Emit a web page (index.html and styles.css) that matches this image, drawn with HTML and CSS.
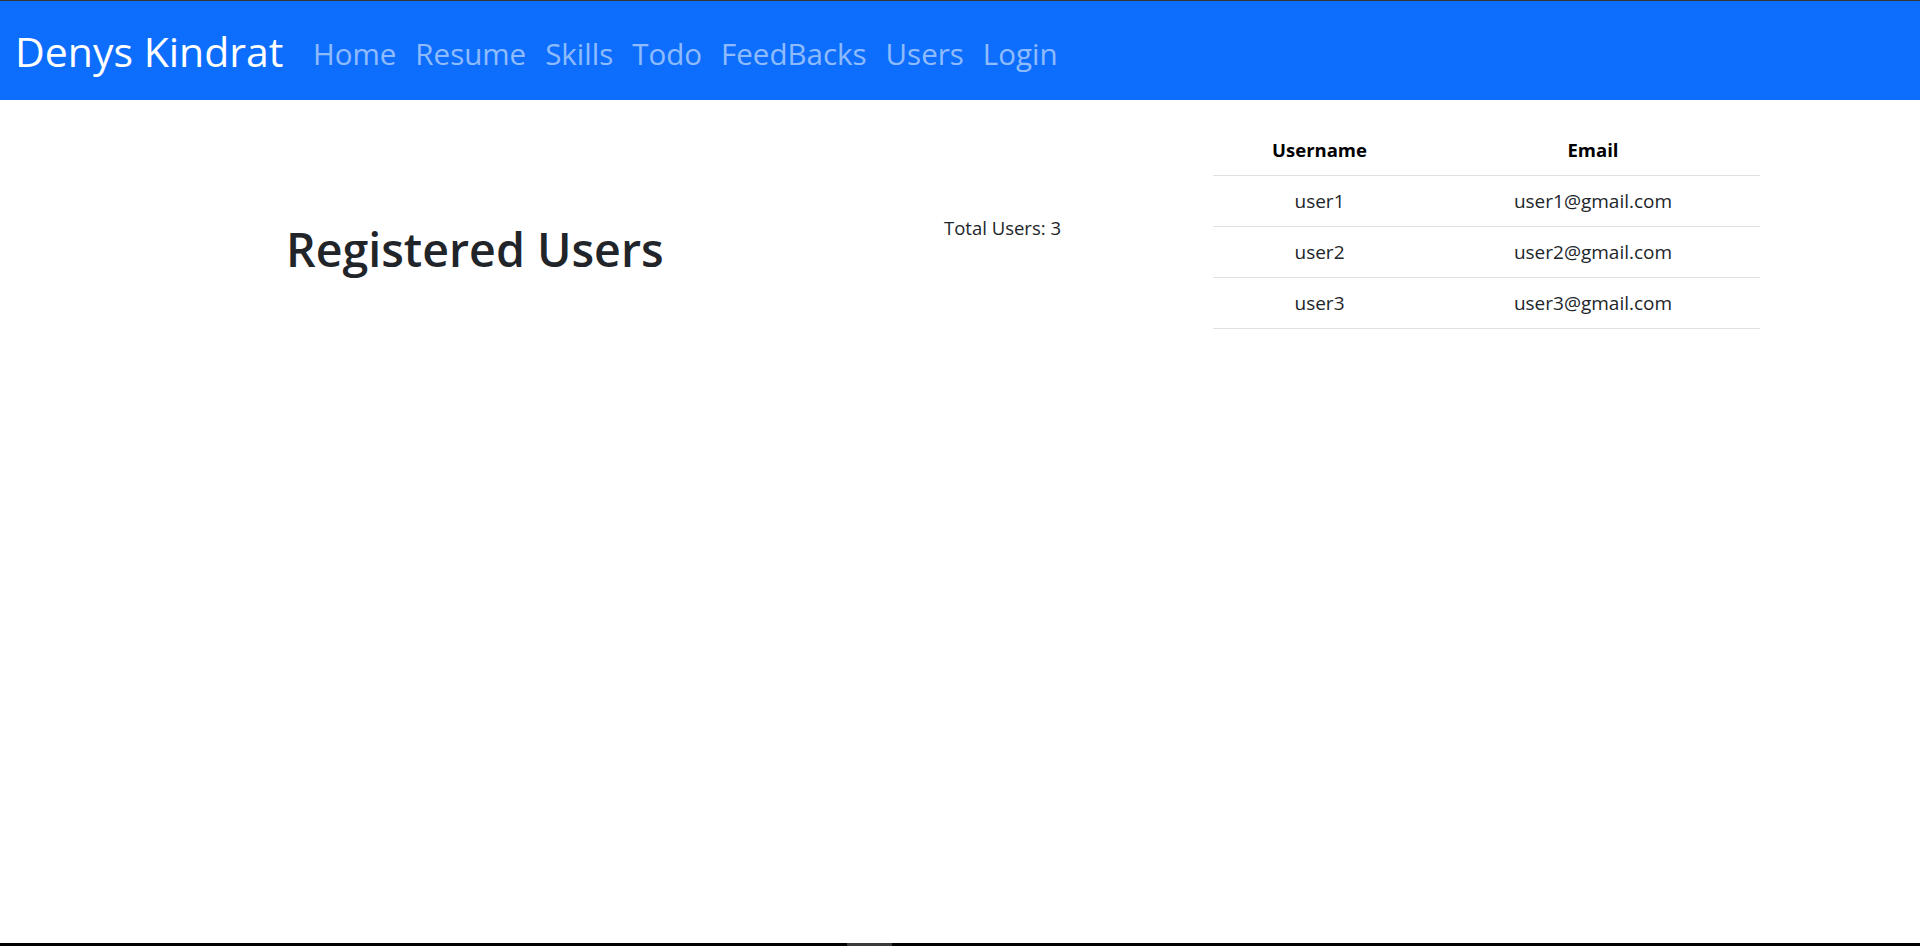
FILE: index.html
```html
<!DOCTYPE html>
<html lang="en">
<head>
<meta charset="utf-8">
<title>Registered Users</title>
<link rel="stylesheet" href="styles.css">
</head>
<body>
<div class="page">
  <nav class="navbar">
    <a class="brand" href="#">Denys Kindrat</a>
    <ul class="nav">
      <li><a class="nav-link" href="#">Home</a></li>
      <li><a class="nav-link" href="#">Resume</a></li>
      <li><a class="nav-link" href="#">Skills</a></li>
      <li><a class="nav-link" href="#">Todo</a></li>
      <li><a class="nav-link" href="#">FeedBacks</a></li>
      <li><a class="nav-link" href="#">Users</a></li>
      <li><a class="nav-link" href="#">Login</a></li>
    </ul>
  </nav>
  <main class="content">
    <div class="title-col"><h1 class="title">Registered Users</h1></div>
    <div class="total-col"><p class="total">Total Users: 3</p></div>
    <div class="table-col">
      <table class="users">
        <colgroup><col class="c-user"><col class="c-email"></colgroup>
        <thead>
          <tr><th>Username</th><th>Email</th></tr>
        </thead>
        <tbody>
          <tr><td>user1</td><td>user1@gmail.com</td></tr>
          <tr><td>user2</td><td>user2@gmail.com</td></tr>
          <tr><td>user3</td><td>user3@gmail.com</td></tr>
        </tbody>
      </table>
    </div>
  </main>
  <div class="taskbar"><span class="taskbar-thumb"></span></div>
</div>
</body>
</html>
```

FILE: styles.css
```css
html, body {
  margin: 0;
  padding: 0;
}

body {
  font-family: "Open Sans", "Noto Sans", sans-serif;
  color: #212529;
  background: #fff;
}

.page {
  height: 946px;
  display: flex;
  flex-direction: column;
  border-top: 1px solid #353535;
  box-sizing: border-box;
}

.navbar {
  height: 99px;
  flex: none;
  background: #0d6efd;
  display: flex;
  align-items: center;
  padding: 0 15px;
  box-sizing: border-box;
}

.brand {
  font-size: 41px;
  line-height: 1.2;
  color: #fff;
  text-decoration: none;
  margin-right: 20px;
  margin-top: 2px;
}

.nav {
  display: flex;
  list-style: none;
  margin: 0;
  padding: 0;
  margin-top: 6px;
}

.nav-link {
  display: block;
  font-size: 29.5px;
  line-height: 1.2;
  padding: 0 9.5px;
  color: rgba(255, 255, 255, 0.55);
  text-decoration: none;
}

.content {
  flex: 1;
  display: flex;
  align-items: flex-start;
  padding-top: 25px;
}

.title-col {
  width: 944px;
  padding-left: 286px;
  box-sizing: border-box;
  flex: none;
}

.title {
  margin: 0;
  margin-top: 97px;
  font-size: 46.5px;
  font-weight: 600;
  line-height: 1.2;
  color: #212529;
}

.total-col {
  width: 269px;
  flex: none;
}

.total {
  margin: 0;
  margin-top: 88px;
  font-size: 18.5px;
  line-height: 30px;
}

.table-col {
  width: 547px;
  flex: none;
}

.users {
  width: 100%;
  border-collapse: collapse;
  table-layout: fixed;
  font-size: 19px;
}

.c-user { width: 213px; }
.c-email { width: 334px; }

.users th,
.users td {
  padding: 10px 8px;
  line-height: 30px;
  text-align: center;
  border-bottom: 1px solid #dee2e6;
}

.users th {
  color: #000;
  font-weight: 700;
  font-size: 18.5px;
}

.users td {
  color: #212529;
}

.taskbar {
  height: 3px;
  flex: none;
  background: #000;
  display: flex;
  padding-left: 847px;
}

.taskbar-thumb {
  width: 45px;
  background: #3a3a3a;
}
```
